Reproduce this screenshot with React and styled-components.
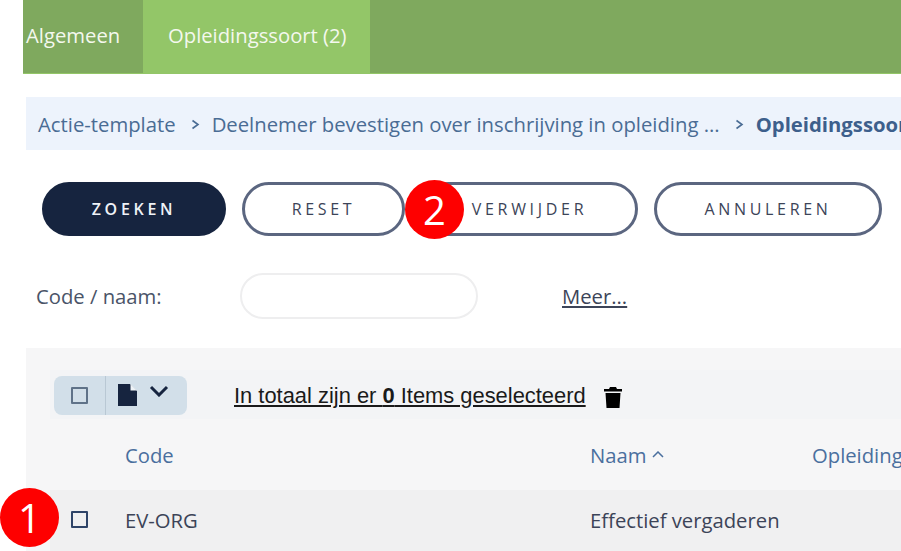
import React from "react";
import styled, { createGlobalStyle } from "styled-components";

const GlobalStyle = createGlobalStyle`
  html, body {
    margin: 0;
    padding: 0;
    background: #fff;
    overflow: hidden;
  }
  body {
    font-family: "Open Sans", "Liberation Sans", sans-serif;
  }
`;

const Page = styled.div`
  position: relative;
  width: 901px;
  height: 551px;
  overflow: hidden;
`;
const TabBar = styled.div`
  height: 74px;
  margin-left: 23px;
  display: flex;
  background: #7fa95e;
  border-bottom: 1px solid #93c668;
  box-sizing: border-box;
`;
const Tab = styled.div`
  display: flex;
  align-items: center;
  padding: ${(p) => (p.$active ? "0 23px 3px 25px" : "0 20px 3px 3px")};
  background: ${(p) => (p.$active ? "#93c668" : "transparent")};
  color: #f4f8ee;
  font-size: 20.25px;
  width: ${(p) => (p.$active ? "227px" : "120px")};
  box-sizing: border-box;
  white-space: nowrap;
`;
const Crumbs = styled.div`
  margin: 23px 0 0 26px;
  height: 53px;
  display: flex;
  align-items: center;
  padding-left: 12px;
  background: #edf3fc;
  color: #4a6c94;
  font-size: 20.3px;
  white-space: nowrap;
`;
const Crumb = styled.span`
  font-weight: ${(p) => (p.$current ? 700 : 400)};
  color: ${(p) => (p.$current ? "#3d5f8c" : "#4a6c94")};
`;
const CrumbArrow = styled.svg`
  width: 9px;
  height: 11px;
  margin: 2px 12px 0 15px;
  flex: none;
`;
const Actions = styled.div`
  margin: 32px 0 0 42px;
  display: flex;
  gap: 16px;
`;
const Button = styled.button`
  width: ${(p) => p.$w}px;
  height: 54px;
  border-radius: 27px;
  box-sizing: border-box;
  border: 3px solid ${(p) => (p.$primary ? "#16243f" : "#5b6680")};
  background: ${(p) => (p.$primary ? "#16243f" : "#fff")};
  color: ${(p) => (p.$primary ? "#eef2f7" : "#3c4458")};
  font-family: inherit;
  font-size: 16px;
  font-weight: ${(p) => (p.$primary ? 600 : 500)};
  letter-spacing: 3.7px;
  padding: 0;
`;
const FormRow = styled.div`
  margin: 37px 0 0 36px;
  height: 46px;
  display: flex;
  align-items: center;
`;
const Label = styled.label`
  width: 204px;
  font-size: 20.25px;
  color: #4a5468;
`;
const Field = styled.div`
  width: 238px;
  height: 46px;
  box-sizing: border-box;
  border: 2px solid #eeeeef;
  border-radius: 23px;
  background: #fff;
`;
const MoreLink = styled.a`
  margin-left: 84px;
  font-size: 20.25px;
  color: #3c4458;
  text-decoration: underline;
`;
const Panel = styled.div`
  margin: 29px 0 0 26px;
  height: 203px;
  padding: 22px 0 0 24px;
  box-sizing: border-box;
  background: #f6f6f7;
`;
const Toolbar = styled.div`
  height: 49px;
  display: flex;
  align-items: center;
  padding-left: 4px;
  background: #f3f4f6;
`;
const Group = styled.div`
  width: 133px;
  height: 39px;
  display: flex;
  align-items: center;
  border-radius: 8px;
  background: #d2dfe9;
  margin-top: 1px;
`;
const GroupCheck = styled.div`
  width: 52px;
  height: 100%;
  display: flex;
  align-items: center;
  justify-content: center;
  box-sizing: border-box;
  border-right: 1px solid #b9c8d4;
`;
const GroupMenu = styled.div`
  display: flex;
  align-items: center;
  gap: 12px;
  padding-left: 12px;
`;
const Check = styled.span`
  display: block;
  width: 17px;
  height: 17px;
  box-sizing: border-box;
  border: 2px solid ${(p) => (p.$muted ? "#5f7288" : "#2f4468")};
  border-radius: 1px;
`;
const Selection = styled.a`
  margin: 2px 0 0 47px;
  font-family: "Liberation Sans", Arial, sans-serif;
  font-size: 21.9px;
  color: #1a1a1a;
  text-decoration: underline;
  white-space: nowrap;
`;
const TrashIcon = styled.svg`
  width: 18px;
  height: 21px;
  margin-left: 18px;
  margin-top: 6px;
`;
const HeadRow = styled.div`
  height: 71px;
  display: flex;
  align-items: center;
  font-size: 20.25px;
  color: #4a6f9e;
  white-space: nowrap;
`;
const DataRow = styled.div`
  height: 61px;
  display: flex;
  align-items: center;
  background: #f0f0f1;
  font-size: 20.25px;
  color: #3c4458;
  white-space: nowrap;
  padding-bottom: 2px;
  box-sizing: border-box;
`;
const CheckCell = styled.div`
  width: 75px;
  flex: none;
  padding-left: 21px;
  box-sizing: border-box;
`;
const CodeCell = styled.div`
  width: 465px;
  flex: none;
`;
const NameCell = styled.div`
  width: 222px;
  flex: none;
  display: flex;
  align-items: center;
  gap: 5px;
`;
const Badge = styled.div`
  position: absolute;
  left: ${(p) => p.$x}px;
  top: ${(p) => p.$y}px;
  width: 59px;
  height: 59px;
  border-radius: 50%;
  background: #fe0000;
  color: #fff;
  font-size: 40px;
  line-height: 59px;
  text-align: center;
`;

const Arrow = () => (
  <CrumbArrow viewBox="0 0 9 11">
    <path d="M1.5 1.5 L7 5.5 L1.5 9.5" fill="none" stroke="#4a6c94" strokeWidth="1.6" />
  </CrumbArrow>
);

const App = () => {
  return (
    <Page>
      <GlobalStyle />
      <TabBar>
        <Tab>Algemeen</Tab>
        <Tab $active>Opleidingssoort (2)</Tab>
      </TabBar>
      <Crumbs>
        <Crumb>Actie-template</Crumb>
        <Arrow />
        <Crumb>Deelnemer bevestigen over inschrijving in opleiding ...</Crumb>
        <Arrow />
        <Crumb $current>Opleidingssoort</Crumb>
      </Crumbs>
      <Actions>
        <Button $primary $w={184}>ZOEKEN</Button>
        <Button $w={163}>RESET</Button>
        <Button $w={217}>VERWIJDER</Button>
        <Button $w={228}>ANNULEREN</Button>
      </Actions>
      <FormRow>
        <Label>Code / naam:</Label>
        <Field />
        <MoreLink>Meer...</MoreLink>
      </FormRow>
      <Panel>
        <Toolbar>
          <Group>
            <GroupCheck>
              <Check $muted />
            </GroupCheck>
            <GroupMenu>
              <svg width="19" height="22" viewBox="0 0 19 22">
                <path d="M0 0 H12 L19 7 V22 H0 Z" fill="#16243f" />
                <path d="M12.5 0 L19 6.5 H12.5 Z" fill="#eef3f7" />
              </svg>
              <svg width="20" height="12" viewBox="0 0 20 12" style={{ marginTop: -8 }}>
                <path d="M2 2 L10 10 L18 2" fill="none" stroke="#16243f" strokeWidth="3" />
              </svg>
            </GroupMenu>
          </Group>
          <Selection>
            In totaal zijn er <b>0</b> Items geselecteerd
          </Selection>
          <TrashIcon viewBox="0 0 18 21">
            <path d="M6 0 H12 L13 2 H18 V4.5 H0 V2 H5 Z M1.5 6 H16.5 L15.5 21 H2.5 Z" fill="#000" />
          </TrashIcon>
        </Toolbar>
        <HeadRow>
          <CheckCell />
          <CodeCell>Code</CodeCell>
          <NameCell>
            Naam
            <svg width="12" height="7" viewBox="0 0 12 7">
              <path d="M1 6 L6 1 L11 6" fill="none" stroke="#4a6f9e" strokeWidth="1.5" />
            </svg>
          </NameCell>
          <div>Opleidingssoort</div>
        </HeadRow>
        <DataRow>
          <CheckCell>
            <Check />
          </CheckCell>
          <CodeCell>EV-ORG</CodeCell>
          <NameCell>Effectief vergaderen</NameCell>
        </DataRow>
      </Panel>
      <Badge $x={0} $y={488}>1</Badge>
      <Badge $x={405} $y={180}>2</Badge>
    </Page>
  );
};

export default App;
